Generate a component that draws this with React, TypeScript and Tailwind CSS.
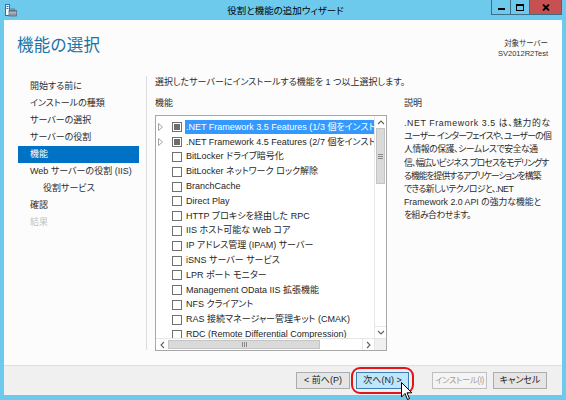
import React from 'react';

const font = "font-['Liberation_Sans','Noto_Sans_CJK_JP',sans-serif] [font-feature-settings:'palt']";

const navItems: { label: string; state?: 'active' | 'disabled'; indent?: boolean }[] = [
  { label: '開始する前に' },
  { label: 'インストールの種類' },
  { label: 'サーバーの選択' },
  { label: 'サーバーの役割' },
  { label: '機能', state: 'active' },
  { label: 'Web サーバーの役割 (IIS)' },
  { label: '役割サービス', indent: true },
  { label: '確認' },
  { label: '結果', state: 'disabled' },
];

const features: { label: string; expand?: boolean; partial?: boolean; selected?: boolean }[] = [
  { label: '.NET Framework 3.5 Features (1/3 個をインストール済み)', expand: true, partial: true, selected: true },
  { label: '.NET Framework 4.5 Features (2/7 個をインストール済み)', expand: true, partial: true },
  { label: 'BitLocker ドライブ暗号化' },
  { label: 'BitLocker ネットワーク ロック解除' },
  { label: 'BranchCache' },
  { label: 'Direct Play' },
  { label: 'HTTP プロキシを経由した RPC' },
  { label: 'IIS ホスト可能な Web コア' },
  { label: 'IP アドレス管理 (IPAM) サーバー' },
  { label: 'iSNS サーバー サービス' },
  { label: 'LPR ポート モニター' },
  { label: 'Management OData IIS 拡張機能' },
  { label: 'NFS クライアント' },
  { label: 'RAS 接続マネージャー管理キット (CMAK)' },
  { label: 'RDC (Remote Differential Compression)' },
];

// wrapped the same way as the dialog; tracking evens out the narrower kana of the original font
const description: [string, string][] = [
  ['.NET Framework 3.5 は、魅力的な', 'tracking-[0.6px]'],
  ['ユーザー インターフェイスや、ユーザーの個', 'tracking-[-0.7px]'],
  ['人情報の保護、シームレスで安全な通', 'tracking-[-0.4px]'],
  ['信、幅広いビジネス プロセスをモデリングす', 'tracking-[-0.9px]'],
  ['る機能を提供するアプリケーションを構築', 'tracking-[-1px]'],
  ['できる新しいテクノロジと、.NET', 'tracking-[-0.6px]'],
  ['Framework 2.0 API の強力な機能と', 'tracking-normal'],
  ['を組み合わせます。', 'tracking-[-0.5px]'],
];

const AppIcon = () => (
  <svg width="12" height="13" viewBox="0 0 12 13">
    <rect x="0.5" y="0.5" width="4" height="11" fill="#ffffff" stroke="#2c6fb6" />
    <rect x="1.5" y="2" width="2" height="1" fill="#2c6fb6" />
    <rect x="1.5" y="4" width="2" height="1" fill="#2c6fb6" />
    <rect x="4" y="6.5" width="7.5" height="5.5" fill="#8a97a5" stroke="#5d6b79" strokeWidth="0.8" />
    <rect x="6" y="5" width="3.5" height="1.8" fill="none" stroke="#5d6b79" strokeWidth="0.8" />
    <rect x="4.4" y="8.5" width="6.8" height="0.8" fill="#c9d2db" />
  </svg>
);

const Checkbox = ({ partial }: { partial?: boolean }) => (
  <span className="w-[10px] h-[10px] border border-[#707070] bg-white flex items-center justify-center shrink-0">
    {partial && <span className="w-[6px] h-[6px] bg-[#6e6e6e]" />}
  </span>
);

const Expander = () => (
  <svg width="5" height="8" viewBox="0 0 5 8" className="shrink-0">
    <path d="M0.5 0.5 L4.5 4 L0.5 7.5 Z" fill="none" stroke="#a6a6a6" />
  </svg>
);

const Arrow = ({ dir }: { dir: 'up' | 'down' | 'left' | 'right' }) => {
  const d = {
    up: 'M1 4 L4 1 L7 4',
    down: 'M1 1 L4 4 L7 1',
    left: 'M4 1 L1 4 L4 7',
    right: 'M1 1 L4 4 L1 7',
  }[dir];
  const vertical = dir === 'up' || dir === 'down';
  return (
    <svg width={vertical ? 8 : 5} height={vertical ? 5 : 8} viewBox={vertical ? '0 0 8 5' : '0 0 5 8'}>
      <path d={d} fill="none" stroke="#606060" strokeWidth="1.1" />
    </svg>
  );
};

const Cursor = () => (
  <svg width="12" height="19" viewBox="0 0 12 19" className="absolute left-[45px] top-[10px]">
    <path d="M0.5 0.5 L0.5 15 L4 11.5 L6.5 17.5 L8.5 16.6 L6 10.8 L10.8 10.8 Z" fill="#ffffff" stroke="#000000" strokeWidth="1" strokeLinejoin="round" />
  </svg>
);

export default function App() {
  return (
    <div className={`w-[566px] h-[400px] bg-[#6dcaed] flex flex-col overflow-hidden ${font} text-[9px] leading-none text-[#1e1e1e]`}>
      {/* title bar */}
      <div className="h-[20px] flex items-start shrink-0 relative">
        <div className="pl-[5px] pt-[4px] w-[80px]">
          <AppIcon />
        </div>
        <div className="flex-1 text-center pt-[6px] text-[9.5px] text-black">役割と機能の追加ウィザード</div>
        <div className="flex h-[15px] w-[71px] mr-[4px] border border-t-0 border-[#3a6d88]">
          <div className="w-[19px] flex items-end justify-center pb-[4px] border-r border-[#3a6d88]">
            <span className="w-[7px] h-[2px] bg-black" />
          </div>
          <div className="w-[19px] flex items-center justify-center border-r border-[#3a6d88]">
            <span className="w-[8px] h-[7px] border border-black border-t-[2px]" />
          </div>
          <div className="flex-1 bg-[#c75050] flex items-center justify-center">
            <svg width="8" height="7" viewBox="0 0 8 7">
              <path d="M1 0.5 L7 6.5 M7 0.5 L1 6.5" stroke="#000" strokeWidth="1.8" />
            </svg>
          </div>
        </div>
      </div>

      {/* window body */}
      <div className="flex-1 mx-[4px] mb-[5px] bg-[#fcfcfc] flex flex-col min-h-0">
        {/* header */}
        <div className="h-[56px] flex justify-between shrink-0">
          <div className="pl-[13px] pt-[17px] text-[16.5px] text-[#1b73a6] tracking-[0.3px]">機能の選択</div>
          <div className="pr-[14px] pt-[19px] text-right text-[7.5px] leading-[10px] text-[#333]">
            <div>対象サーバー</div>
            <div>SV2012R2Test</div>
          </div>
        </div>

        {/* main */}
        <div className="flex-1 flex min-h-0">
          <div className="w-[135px] pl-[14px] pt-[2px] shrink-0">
            {navItems.map((item) => (
              <div
                key={item.label}
                className={`h-[17px] flex items-center whitespace-nowrap ${item.indent ? 'pl-[25px]' : 'pl-[12px]'} ${
                  item.state === 'active'
                    ? 'bg-[#0072c6] text-white'
                    : item.state === 'disabled'
                      ? 'text-[#c2c2c2]'
                      : 'text-[#2b2b2b]'
                }`}
              >
                {item.label}
              </div>
            ))}
          </div>

          <div className="w-px bg-[#dcdcdc] mb-[15px] ml-[7px] shrink-0" />

          <div className="flex-1 pl-[8px] flex gap-[17px] min-w-0">
            <div className="w-[232px] flex flex-col shrink-0">
              <div className="pt-[2px] h-[13px] text-[#2b2b2b] whitespace-nowrap">選択したサーバーにインストールする機能を 1 つ以上選択します。</div>
              <div className="pt-[10px] h-[26px] text-[#2b2b2b]">機能</div>

              {/* listbox */}
              <div className="w-[232px] h-[236px] border border-[#a8a8a8] bg-white flex flex-col">
                <div className="flex-1 flex min-h-0">
                  <div className="flex-1 overflow-hidden pt-[4px] min-w-0">
                    {features.map((f) => (
                      <div key={f.label} className="h-[14.8px] flex items-center whitespace-nowrap">
                        <div className="w-[16px] pl-[2px] flex items-center shrink-0">{f.expand && <Expander />}</div>
                        <Checkbox partial={f.partial} />
                        <span
                          className={`ml-[3px] pl-[1px] h-[14px] flex items-center shrink-0 ${
                            f.selected ? 'bg-[#3399ff] text-white min-w-[200px]' : 'text-[#1e1e1e]'
                          }`}
                        >
                          {f.label}
                        </span>
                      </div>
                    ))}
                  </div>
                  {/* vertical scrollbar */}
                  <div className="w-[12px] border-l border-[#e6e6e6] bg-white flex flex-col shrink-0">
                    <div className="h-[12px] flex items-center justify-center">
                      <Arrow dir="up" />
                    </div>
                    <div className="h-[56px] mx-[1px] bg-[#dadada] border border-[#c4c4c4] flex items-center justify-center">
                      <div className="flex flex-col gap-[1px]">
                        <span className="w-[5px] h-px bg-[#8a8a8a]" />
                        <span className="w-[5px] h-px bg-[#8a8a8a]" />
                        <span className="w-[5px] h-px bg-[#8a8a8a]" />
                      </div>
                    </div>
                    <div className="flex-1" />
                    <div className="h-[12px] flex items-center justify-center border-t border-[#e6e6e6]">
                      <Arrow dir="down" />
                    </div>
                  </div>
                </div>
                {/* horizontal scrollbar */}
                <div className="h-[12px] flex border-t border-[#e6e6e6] shrink-0">
                  <div className="w-[12px] flex items-center justify-center">
                    <Arrow dir="left" />
                  </div>
                  <div className="w-[152px] my-[1px] bg-[#dadada] border border-[#c4c4c4] flex items-center justify-center">
                    <div className="flex gap-[1px]">
                      <span className="w-px h-[5px] bg-[#8a8a8a]" />
                      <span className="w-px h-[5px] bg-[#8a8a8a]" />
                      <span className="w-px h-[5px] bg-[#8a8a8a]" />
                    </div>
                  </div>
                  <div className="flex-1 bg-white" />
                  <div className="w-[12px] flex items-center justify-center border-l border-[#e6e6e6]">
                    <Arrow dir="right" />
                  </div>
                  <div className="w-[12px] bg-[#f0f0f0] border-l border-[#e6e6e6]" />
                </div>
              </div>
            </div>

            {/* description */}
            <div className="flex-1 pt-[23px] pr-[12px]">
              <div className="h-[18px] text-[#2b2b2b]">説明</div>
              <div className="text-[#2b2b2b] text-[8.8px] leading-[13.2px]">
                {description.map(([line, tracking]) => (
                  <div key={line} className={`whitespace-nowrap ${tracking}`}>{line}</div>
                ))}
              </div>
            </div>
          </div>
        </div>

        {/* footer */}
        <div className="h-[30px] border-t border-[#dedede] bg-[#f0f0f0] flex items-center justify-end pr-[15px] gap-[6px] shrink-0">
          <button className="w-[54px] h-[17px] border border-[#acacac] bg-[#e5e5e5] text-[#1e1e1e] flex items-center justify-center whitespace-nowrap">
            &lt; 前へ(P)
          </button>
          <div className="relative">
            <button className="w-[53px] h-[17px] border border-[#3c7fb1] bg-[#bee6fd] text-[#1e1e1e] flex items-center justify-center whitespace-nowrap">
              次へ(N) &gt;
            </button>
            <div className="absolute -left-[5px] -right-[5px] -top-[5px] -bottom-[5px] border-2 border-[#e5121a] rounded-[9px] pointer-events-none" />
            <Cursor />
          </div>
          <button className="ml-[17px] w-[55px] h-[17px] border border-[#bfbfbf] bg-[#f4f4f4] text-[#a0a0a0] text-[8.4px] flex items-center justify-center whitespace-nowrap tracking-[-0.4px]">
            インストール(I)
          </button>
          <button className="w-[54px] h-[17px] border border-[#acacac] bg-[#e5e5e5] text-[#1e1e1e] flex items-center justify-center whitespace-nowrap">
            キャンセル
          </button>
        </div>
      </div>
    </div>
  );
}
